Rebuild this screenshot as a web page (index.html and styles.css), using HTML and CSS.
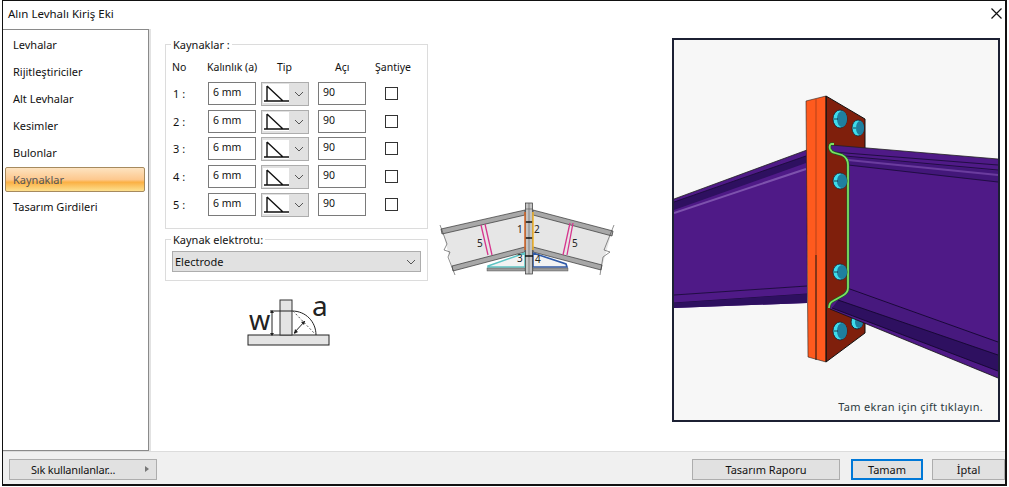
FILE: index.html
```html
<!DOCTYPE html>
<html lang="en">
<head>
    <meta charset="UTF-8">
    <title>Alın Levhalı Kiriş Eki</title>
    <link rel="stylesheet" href="styles.css">
</head>
<body>
    <svg class="defs">
        <symbol id="weld-icon" viewBox="0 0 26 19">
            <rect width="26" height="19" fill="#fff"/>
            <path d="M4 2V17M1 17H26M4 2L20 17" fill="none" stroke="#111" stroke-width="1.4"/>
        </symbol>
        <symbol id="chevron" viewBox="0 0 10 6">
            <path d="M1 1L5 5L9 1" fill="none" stroke="#555" stroke-width="1"/>
        </symbol>
    </svg>

    <div class="window">
        <header class="titlebar">
            <span class="title">Alın Levhalı Kiriş Eki</span>
            <svg class="close" viewBox="0 0 11 11"><path d="M0.5 0.5L10.5 10.5M10.5 0.5L0.5 10.5" stroke="#111" stroke-width="1.2"/></svg>
        </header>

        <main class="main">
            <nav class="sidebar">
                <div class="nav-item">Levhalar</div>
                <div class="nav-item">Rijitleştiriciler</div>
                <div class="nav-item">Alt Levhalar</div>
                <div class="nav-item">Kesimler</div>
                <div class="nav-item">Bulonlar</div>
                <div class="nav-item active">Kaynaklar</div>
                <div class="nav-item">Tasarım Girdileri</div>
            </nav>

            <section class="form-col">
                <fieldset class="group welds">
                    <legend>Kaynaklar :</legend>
                    <div class="weld-grid">
                        <span class="head">No</span>
                        <span class="head head-thick">Kalınlık (a)</span>
                        <span class="head head-type">Tip</span>
                        <span class="head head-angle">Açı</span>
                        <span class="head head-site">Şantiye</span>

                        <span class="num">1 :</span>
                        <div class="field">6 mm</div>
                        <div class="combo"><svg class="combo-icon"><use href="#weld-icon"/></svg><svg class="chev"><use href="#chevron"/></svg></div>
                        <div class="field">90</div>
                        <input class="check" type="checkbox">

                        <span class="num">2 :</span>
                        <div class="field">6 mm</div>
                        <div class="combo"><svg class="combo-icon"><use href="#weld-icon"/></svg><svg class="chev"><use href="#chevron"/></svg></div>
                        <div class="field">90</div>
                        <input class="check" type="checkbox">

                        <span class="num">3 :</span>
                        <div class="field">6 mm</div>
                        <div class="combo"><svg class="combo-icon"><use href="#weld-icon"/></svg><svg class="chev"><use href="#chevron"/></svg></div>
                        <div class="field">90</div>
                        <input class="check" type="checkbox">

                        <span class="num">4 :</span>
                        <div class="field">6 mm</div>
                        <div class="combo"><svg class="combo-icon"><use href="#weld-icon"/></svg><svg class="chev"><use href="#chevron"/></svg></div>
                        <div class="field">90</div>
                        <input class="check" type="checkbox">

                        <span class="num">5 :</span>
                        <div class="field">6 mm</div>
                        <div class="combo"><svg class="combo-icon"><use href="#weld-icon"/></svg><svg class="chev"><use href="#chevron"/></svg></div>
                        <div class="field">90</div>
                        <input class="check" type="checkbox">
                    </div>
                </fieldset>

                <fieldset class="group electrode">
                    <legend>Kaynak elektrotu:</legend>
                    <div class="select">Electrode<svg class="chev"><use href="#chevron"/></svg></div>
                </fieldset>

                <svg class="weld-sketch" viewBox="240 282 100 68">
                    <rect x="248" y="335" width="81" height="10" fill="#e4e4e4" stroke="#222"/>
                    <rect x="280" y="300" width="12" height="35" fill="#e4e4e4" stroke="#333"/>
                    <path d="M292 311C306 311 316 322 316 335" fill="none" stroke="#222"/>
                    <path d="M293 311L316 335" fill="none" stroke="#555" stroke-dasharray="2 2"/>
                    <path d="M294 333L305 321M272 311V335M270 311H292" fill="none" stroke="#222"/>
                    <path d="M294 334L295 329L298 332ZM305 321L301 322L304 325ZM272 310L270 313H274ZM272 336L270 333H274Z" fill="#222"/>
                    <text class="sketch-w" x="249" y="330">w</text>
                    <text class="sketch-a" x="312" y="316">a</text>
                </svg>
            </section>

            <section class="diagram-col">
                <svg class="roof-diagram" viewBox="435 195 190 85">
                    <path d="M442 229L525 211V250L486 258L452 267Z" fill="#e6e6e6"/>
                    <path d="M533 211L612 231L602 267L566 255L533 249Z" fill="#e6e6e6"/>
                    <path d="M441 229L525 210V215L442 234Z" fill="#a8a8a8" stroke="#333" stroke-width=".7"/>
                    <path d="M452 266L525 247V252L453 271Z" fill="#a8a8a8" stroke="#333" stroke-width=".7"/>
                    <path d="M533 210L613 231L612 236L533 215Z" fill="#a8a8a8" stroke="#333" stroke-width=".7"/>
                    <path d="M533 247L602 265L601 270L533 252Z" fill="#a8a8a8" stroke="#333" stroke-width=".7"/>
                    <path d="M440 225L447 244M447 244L444 250L450 252L448 257L455 275" fill="none" stroke="#444" stroke-width=".6"/>
                    <path d="M614 225L604 250L610 252L603 257L600 275" fill="none" stroke="#444" stroke-width=".6"/>
                    <path d="M481 225L488 255M485 224L492 255M570 223L563 255M573 223L567 255" stroke="#d6368e" stroke-width="1.3" fill="none"/>
                    <path d="M488 266L525 253V267H488Z" fill="#f2f2f2" stroke="#5cc4c4" stroke-width="1.6"/>
                    <path d="M533 253L566 264L567 267H533Z" fill="#f2f2f2" stroke="#2f5aa8" stroke-width="1.6"/>
                    <rect x="487" y="268" width="38" height="3" fill="#999" stroke="#444" stroke-width=".4"/>
                    <rect x="533" y="268" width="35" height="3" fill="#999" stroke="#444" stroke-width=".4"/>
                    <rect x="525.5" y="203" width="7" height="71" fill="#c4c4c4" stroke="#333" stroke-width=".7"/>
                    <path d="M529 203V274M525 209H533" stroke="#555" stroke-width=".6"/>
                    <path d="M525 222H533M525 238H533M525 256H533" stroke="#111" stroke-width="1.3"/>
                    <path d="M525 212V250" stroke="#d46a2e" stroke-width="1.6"/>
                    <path d="M533 212V250" stroke="#f2b632" stroke-width="1.6"/>
                    <text class="diagram-label" x="517" y="233">1</text>
                    <text class="diagram-label" x="534" y="233">2</text>
                    <text class="diagram-label" x="517" y="262">3</text>
                    <text class="diagram-label" x="535" y="263">4</text>
                    <text class="diagram-label" x="477" y="247">5</text>
                    <text class="diagram-label" x="572" y="247">5</text>
                </svg>
            </section>

            <section class="preview">
                <svg class="preview-img" viewBox="674 40 324 380">
                    <!-- left beam -->
                    <path d="M674 199L807 150V303L674 308Z" fill="#4f1a87"/>
                    <path d="M674 202L806 156V163L674 210Z" fill="#2e1060"/>
                    <path d="M674 213L806 169" stroke="#7d52ad" stroke-width="2"/>
                    <path d="M674 199L807 150" stroke="#222" stroke-width=".8"/>
                    <path d="M674 202L806 156M674 295L807 286M674 303L807 294" stroke="#1c0c3c" stroke-width=".9"/>
                    <path d="M674 303L807 294V303L674 308Z" fill="#2e1060"/>

                    <!-- end plate -->
                    <path d="M826 96L865 119V333L826 362Z" fill="#7f1f0c" stroke="#111"/>

                    <!-- bolt behind the lower flange -->
                    <ellipse cx="857" cy="322" rx="6" ry="7" fill="#3fdcec" stroke="#123"/>
                    <ellipse cx="859" cy="322" rx="4" ry="6" fill="#1f7f9f"/>

                    <!-- right beam -->
                    <path d="M831 145L998 159V378L830 309L831 302L842 296Q847 293 847 288V165Q848 158 842 155L831 151Z" fill="#4f1a87"/>
                    <path d="M848 157L998 171V182L848 165Z" fill="#43177a"/>
                    <path d="M848 160L998 175" stroke="#6a3c9e" stroke-width="2"/>
                    <path d="M833 152L998 165M845 156L998 170M848 165L998 182" stroke="#1c0c3c" stroke-width=".9"/>
                    <path d="M831 145L998 159" stroke="#222" stroke-width=".8"/>
                    <path d="M847 289L998 342V355L838 300Z" fill="#47197e"/>
                    <path d="M838 300L998 355V371L832 308Z" fill="#2e1060"/>
                    <path d="M847 288L998 342M838 300L998 355M832 308L998 371" stroke="#140830" stroke-width=".9"/>
                    <path d="M830 309L998 378" stroke="#111" stroke-width=".8"/>

                    <!-- weld seam -->
                    <path d="M834 144H831Q829 145 830 149Q831 152 835 153L842 155Q848 158 848 165V288Q848 293 842 296L833 301Q829 303 829 308" fill="none" stroke="#1e5a24" stroke-width="3"/>
                    <path d="M834 144H831Q829 145 830 149Q831 152 835 153L842 155Q848 158 848 165V288Q848 293 842 296L833 301Q829 303 829 308" fill="none" stroke="#7be060" stroke-width="1.8"/>

                    <!-- orange flange -->
                    <path d="M806 101L826 96V362L808 357Z" fill="#ff5a1e" stroke="#222" stroke-width=".6"/>
                    <path d="M816 99V255" stroke="#c2451a" stroke-width="1.2"/>
                    <path d="M816 255V360" stroke="#111" stroke-width="1"/>
                    <path d="M826 96V362" stroke="#111" stroke-width="1"/>

                    <!-- bolts -->
                    <g stroke="#123" stroke-width=".8">
                        <ellipse cx="840" cy="119" rx="7" ry="9" fill="#3fdcec"/>
                        <ellipse cx="842" cy="119" rx="5" ry="8" fill="#1f7f9f" stroke="none"/>
                        <path d="M834 119H838"/>
                        <ellipse cx="858" cy="128" rx="6" ry="8" fill="#3fdcec"/>
                        <ellipse cx="860" cy="128" rx="4" ry="7" fill="#1f7f9f" stroke="none"/>
                        <path d="M853 128H856"/>
                        <ellipse cx="840" cy="181" rx="7" ry="8" fill="#3fdcec"/>
                        <ellipse cx="842" cy="181" rx="5" ry="7" fill="#1f7f9f" stroke="none"/>
                        <path d="M834 181H838"/>
                        <ellipse cx="840" cy="272" rx="7" ry="8" fill="#3fdcec"/>
                        <ellipse cx="842" cy="272" rx="5" ry="7" fill="#1f7f9f" stroke="none"/>
                        <path d="M834 272H838"/>
                        <ellipse cx="840" cy="331" rx="7" ry="9" fill="#3fdcec"/>
                        <ellipse cx="842" cy="331" rx="5" ry="8" fill="#1f7f9f" stroke="none"/>
                        <path d="M834 331H838"/>
                    </g>
                </svg>
                <span class="preview-hint">Tam ekran için çift tıklayın.</span>
            </section>
        </main>

        <footer class="footer">
            <button class="btn favorites">Sık kullanılanlar...<span class="arrow"></span></button>
            <div class="footer-right">
                <button class="btn report">Tasarım Raporu</button>
                <button class="btn ok">Tamam</button>
                <button class="btn cancel">İptal</button>
            </div>
        </footer>
    </div>
</body>
</html>
```

FILE: styles.css
```css
* {
    box-sizing: border-box;
}

body {
    margin: 0;
    background: #fff;
    font-family: 'Noto Sans', sans-serif;
    font-size: 11px;
    color: #111;
}

.defs {
    display: none;
}

.window {
    width: 1005px;
    height: 486px;
    margin-left: 2px;
    border: 1px solid #111;
    border-width: 1px 2px 2px 1px;
    display: flex;
    flex-direction: column;
    background: #fff;
}

.titlebar {
    height: 28px;
    flex: none;
    display: flex;
    align-items: center;
    justify-content: space-between;
    padding: 0 3px 4px 5px;
    font-size: 11.5px;
}

.close {
    width: 11px;
    height: 11px;
}

.main {
    flex: 1;
    display: flex;
    min-height: 0;
}

.sidebar {
    width: 146px;
    flex: none;
    border: 1px solid #8a8a8a;
    border-left: none;
    box-shadow: 2px 0 0 #e2e2e2;
    padding: 2px 3px 2px 2px;
}

.nav-item {
    height: 27px;
    line-height: 25px;
    padding-left: 8px;
}

.nav-item.active {
    height: 25px;
    margin: 0 0 2px;
    padding-left: 7px;
    line-height: 23px;
    color: #555;
    border: 1px solid #a68a5e;
    border-radius: 2px;
    background: linear-gradient(#fde3c0, #fdc88e 50%, #fbb044 62%, #fde08f);
}

.form-col {
    width: 263px;
    margin-left: 16px;
    flex: none;
}

.group {
    margin: 0;
    min-width: 0;
    border: 1px solid #dcdcdc;
    padding: 0 6px;
}

.group legend {
    padding: 0 2px;
    margin-left: -1px;
    line-height: 15px;
}

.welds {
    height: 192px;
    margin-top: 8px;
}

.weld-grid {
    display: grid;
    grid-template-columns: 35px 53px 57px 67px 40px;
    grid-template-rows: 17px repeat(5, 23px);
    row-gap: 4.75px;
    align-items: center;
    margin-top: 8px;
    padding-left: 1px;
}

.head {
    white-space: nowrap;
    align-self: start;
    font-size: 10.5px;
}

.head:first-child {
    margin-left: -1px;
}

.head-thick {
    margin-left: -1px;
}

.head-type {
    margin-left: 16px;
}

.head-angle {
    margin-left: 17px;
}

.head-site {
    margin-left: -10px;
}

.field {
    width: 48px;
    height: 23px;
    border: 1px solid #7a7a7a;
    line-height: 19px;
    padding-left: 4px;
    font-size: 10.5px;
    background: #fff;
}

.combo {
    width: 48px;
    height: 24px;
    background: #e1e1e1;
    border: 1px solid #adadad;
    display: flex;
    align-items: center;
    padding-left: 1px;
    align-self: start;
}

.combo-icon {
    width: 26px;
    height: 19px;
}

.chev {
    width: 10px;
    height: 6px;
    margin-left: auto;
}

.combo .chev {
    margin-right: 4px;
}

.check {
    appearance: none;
    width: 13px;
    height: 13px;
    margin: 0;
    border: 1px solid #333;
    background: #fff;
}

.electrode {
    height: 49px;
    margin-top: 3px;
}

.select {
    height: 21px;
    margin-top: 4px;
    border: 1px solid #adadad;
    background: #e1e1e1;
    display: flex;
    align-items: center;
    padding: 0 4px 0 2px;
    width: 249px;
}

.weld-sketch {
    display: block;
    width: 100px;
    height: 68px;
    margin: 1px 0 0 75px;
}

.sketch-w {
    font-family: 'Noto Sans', sans-serif;
    font-size: 27px;
    fill: #222;
}

.sketch-a {
    font-family: 'Noto Sans', sans-serif;
    font-size: 28px;
    fill: #222;
}

.diagram-col {
    width: 190px;
    margin-left: 7px;
    flex: none;
}

.roof-diagram {
    display: block;
    width: 190px;
    height: 85px;
    margin-top: 166px;
}

.diagram-label {
    font-family: 'Noto Sans', sans-serif;
    font-size: 10px;
    fill: #222;
}

.preview {
    position: relative;
    width: 328px;
    height: 384px;
    margin: 9px 0 0 47px;
    flex: none;
    border: 2px solid #1c2033;
    background: #f7f7f7;
}

.preview-img {
    display: block;
    width: 324px;
    height: 380px;
}

.preview-hint {
    position: absolute;
    right: 15px;
    bottom: 6px;
    color: #2c3a40;
    letter-spacing: 0.3px;
}

.footer {
    height: 33px;
    flex: none;
    background: #f0f0f0;
    border-top: 1px solid #dcdcdc;
    display: flex;
    justify-content: space-between;
    align-items: flex-start;
    padding: 7px 0 0 6px;
}

.footer-right {
    display: flex;
}

.btn {
    height: 21px;
    padding: 0;
    font: inherit;
    color: #111;
    background: #e1e1e1;
    border: 1px solid #adadad;
}

.favorites {
    width: 148px;
    position: relative;
    text-align: left;
    padding-left: 21px;
    letter-spacing: -0.2px;
}

.arrow {
    position: absolute;
    right: 7px;
    top: 6px;
    border-left: 4px solid #777;
    border-top: 3.5px solid transparent;
    border-bottom: 3.5px solid transparent;
}

.report {
    width: 148px;
}

.ok {
    width: 72px;
    margin-left: 11px;
    border: 2px solid #0078d7;
}

.cancel {
    width: 73px;
    margin-left: 9px;
}
```
